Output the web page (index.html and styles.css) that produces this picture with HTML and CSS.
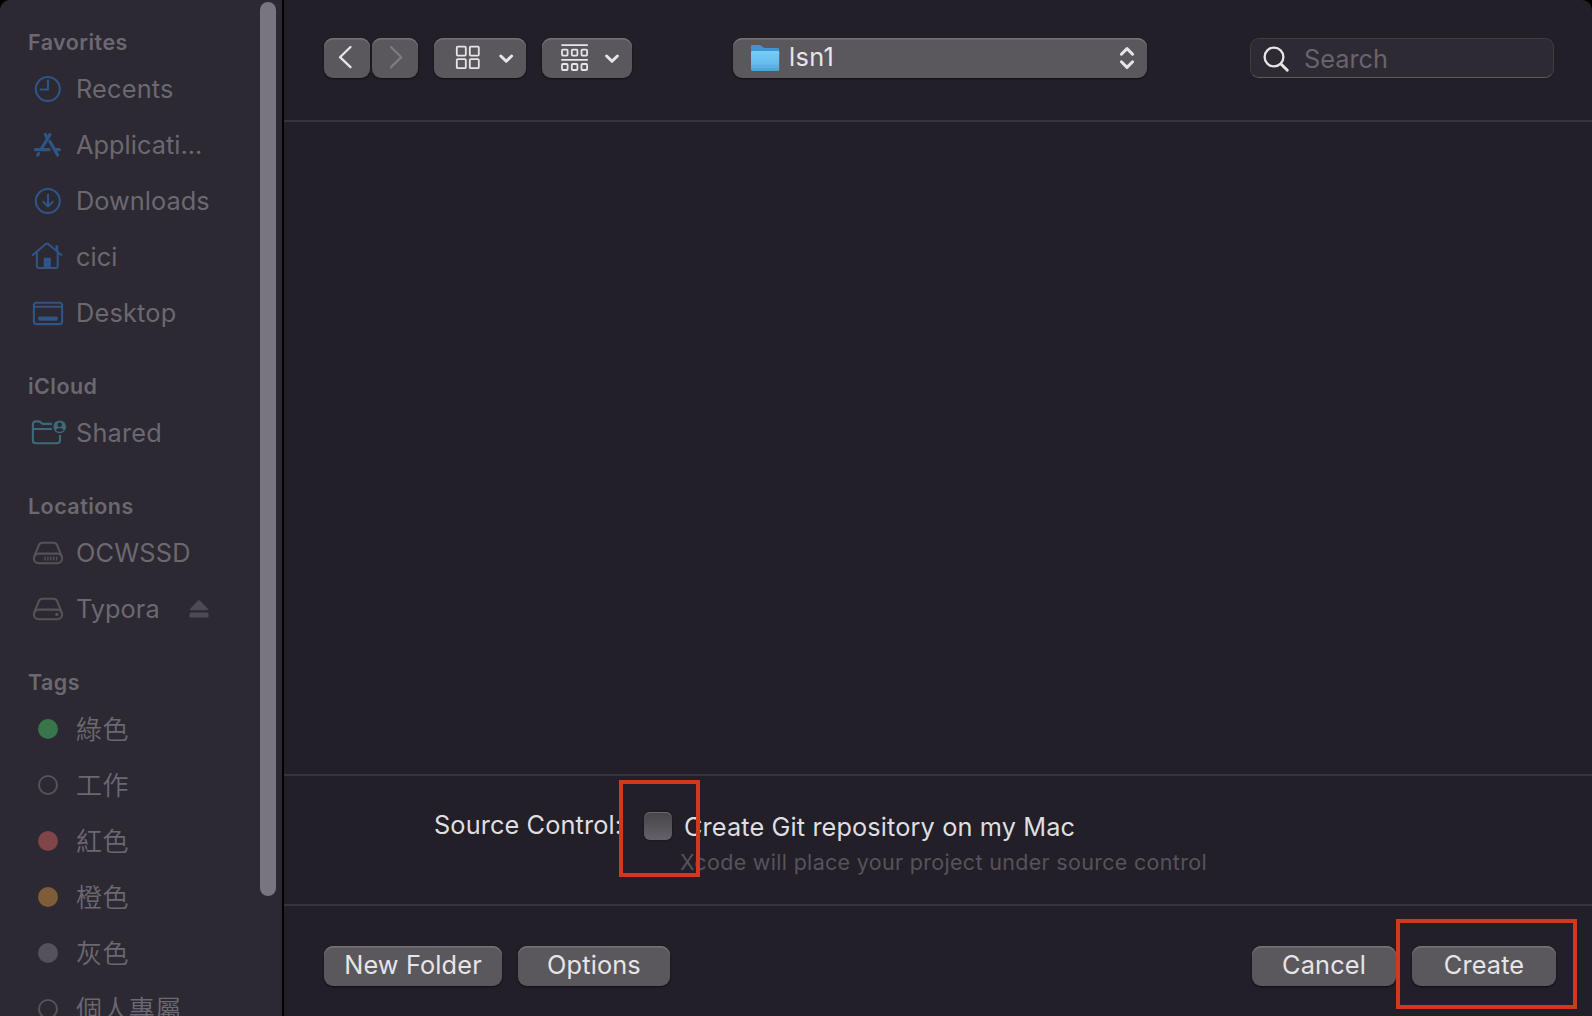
FILE: index.html
```html
<!DOCTYPE html>
<html lang="en">
<head>
<meta charset="utf-8">
<title>Save panel</title>
<link rel="stylesheet" href="styles.css">
</head>
<body>
<div class="window">
  <aside class="sidebar">
    <nav class="places">
      <h2 class="heading first">Favorites</h2>
      <div class="row"><svg class="icon blue" viewBox="0 0 40 40"><circle cx="19.8" cy="20" r="12"/><path d="M20 11.5V20.5H12.5"/></svg><span>Recents</span></div>
      <div class="row"><svg class="icon blue bold" viewBox="0 0 40 40"><path d="M22 9.5L13.6 23.5M17.3 9.5L19.3 12.8M21.9 16.5L29.6 30M7.5 24.7H21M28 24.7H31.3M9.6 30.2L10.7 28.6"/></svg><span class="tight">Applicati...</span></div>
      <div class="row"><svg class="icon blue" viewBox="0 0 40 40"><circle cx="19.8" cy="20" r="12"/><path d="M20 13.8V25.2M15.3 20.8L20 25.5L24.7 20.8"/></svg><span class="tight">Downloads</span></div>
      <div class="row"><svg class="icon blue" viewBox="0 0 40 40"><path d="M4.8 18L17.8 7Q19 6 20.2 7L33.4 18M8.9 15V29Q8.9 31 10.9 31H27.7Q29.7 31 29.7 29V15"/><path class="fill" d="M15.7 20.8H22.9V31H15.7ZM27.5 8.3H30.2V15L27.5 12.7Z"/></svg><span class="tight">cici</span></div>
      <div class="row"><svg class="icon blue" viewBox="0 0 40 40"><rect x="5.9" y="9.7" width="28.2" height="21.4" rx="2.5"/><path d="M6 13.8H34"/><rect class="fill" x="10.3" y="23.6" width="19.4" height="4.2" rx="1"/></svg><span>Desktop</span></div>

      <h2 class="heading">iCloud</h2>
      <div class="row"><svg class="icon teal" viewBox="0 0 40 40"><path d="M24 10.9H15.5Q14.5 10.9 13.6 10.1L12.6 9.2Q11.7 8.4 10.5 8.4H7.8Q4.9 8.4 4.9 11.3V27.4Q4.9 30.2 7.8 30.2H29Q32 30.2 32 27.3V22M5 16H24"/><circle class="fill" cx="31.7" cy="13.8" r="6.4"/><circle class="hole" cx="31.7" cy="11.7" r="2.2"/><path class="hole" d="M27.7 17.4Q28.8 14.9 31.7 14.9Q34.6 14.9 35.7 17.4Q34.2 18.8 31.7 18.8Q29.2 18.8 27.7 17.4Z"/></svg><span>Shared</span></div>

      <h2 class="heading">Locations</h2>
      <div class="row"><svg class="icon drive" viewBox="0 0 40 40"><rect x="5.9" y="20.6" width="28.2" height="9.6" rx="4.8"/><path d="M6.3 23.5L10.8 12.3Q11.8 9.8 14.3 9.8H25.7Q28.2 9.8 29.2 12.3L33.7 23.5"/><path class="thin" d="M17 23.4V27.4M19.9 23.4V27.4M22.8 23.4V27.4M25.7 23.4V27.4M28.6 23.4V27.4"/></svg><span>OCWSSD</span></div>
      <div class="row"><svg class="icon drive" viewBox="0 0 40 40"><rect x="5.9" y="20.6" width="28.2" height="9.6" rx="4.8"/><path d="M6.3 23.5L10.8 12.3Q11.8 9.8 14.3 9.8H25.7Q28.2 9.8 29.2 12.3L33.7 23.5"/><circle class="fill" cx="28.8" cy="25.4" r="1.7"/></svg><span class="grow tight">Typora</span><svg class="eject" viewBox="0 0 20 20"><path d="M9 1.6Q10 .6 11 1.6L19 10Q20 11.3 18.5 11.3H1.5Q0 11.3 1 10Z"/><rect x=".5" y="13.6" width="19" height="5" rx="1.2"/></svg></div>

      <h2 class="heading">Tags</h2>
      <div class="row"><i class="tag green"></i><span class="cjk">綠色</span></div>
      <div class="row"><i class="tag hollow"></i><span class="cjk">工作</span></div>
      <div class="row"><i class="tag red"></i><span class="cjk">紅色</span></div>
      <div class="row"><i class="tag orange"></i><span class="cjk">橙色</span></div>
      <div class="row"><i class="tag gray"></i><span class="cjk">灰色</span></div>
      <div class="row"><i class="tag hollow"></i><span class="cjk">個人專屬</span></div>
    </nav>
    <div class="scrollbar"></div>
  </aside>

  <main class="main">
    <header class="toolbar">
      <div class="btn nav"><svg width="46" height="40" viewBox="0 0 46 40"><path class="s2" d="M26.5 9L16 19.2L26.5 29.2"/></svg></div>
      <div class="btn nav forward"><svg width="46" height="40" viewBox="0 0 46 40"><path class="s2" d="M19 9L29.3 19.2L19 29.2"/></svg></div>
      <div class="btn view"><svg width="92" height="40" viewBox="0 0 92 40"><g class="s15"><rect x="22.8" y="8.6" width="9" height="9" rx="1"/><rect x="35.8" y="8.6" width="9" height="9" rx="1"/><rect x="22.8" y="21.2" width="9" height="9" rx="1"/><rect x="35.8" y="21.2" width="9" height="9" rx="1"/></g><path class="s3" d="M66.8 18L72.2 23.3L77.6 18"/></svg></div>
      <div class="btn group"><svg width="90" height="40" viewBox="0 0 90 40"><g class="s18"><path d="M20 7.1H45.2M20 21.8H45.2"/><rect x="20" y="11.6" width="5.6" height="6" rx="1"/><rect x="29.8" y="11.6" width="5.6" height="6" rx="1"/><rect x="39.5" y="11.6" width="5.6" height="6" rx="1"/><rect x="20" y="26" width="5.6" height="6" rx="1"/><rect x="29.8" y="26" width="5.6" height="6" rx="1"/><rect x="39.5" y="26" width="5.6" height="6" rx="1"/></g><path class="s3" d="M64.6 18L70 23.3L75.4 18"/></svg></div>
      <div class="btn popup">
        <svg class="folder" width="30" height="28" viewBox="0 0 30 28"><defs><linearGradient id="front" x1="0" y1="0" x2="0" y2="1"><stop offset="0" stop-color="#78cdf8"/><stop offset=".7" stop-color="#62bbec"/><stop offset="1" stop-color="#4aa0d3"/></linearGradient></defs><path fill="#3f95cf" d="M1 2.2Q1 1 2.2 1H9.5Q10.6 1 11.4 1.8L13 3.2Q13.8 4 15 4H28Q29.2 4 29.2 5.2V12H1Z"/><path fill="url(#front)" d="M1 8.2Q1 7 2.2 7H28Q29.2 7 29.2 8.2V25.5Q29.2 27 28 27H2.2Q1 27 1 25.5Z"/><path fill="#4fa6d8" d="M1 21H29.2V21.6H1ZM1 24.6H29.2V25.2H1Z"/></svg>
        <span class="name">lsn1</span>
        <svg width="16" height="24" viewBox="0 0 16 24"><path class="s3" d="M2.4 8.2L8 2.6L13.6 8.2M2.4 15.8L8 21.4L13.6 15.8"/></svg>
      </div>
      <div class="search"><svg width="28" height="28" viewBox="0 0 28 28"><circle class="s2" cx="11" cy="11" r="9.4"/><path class="s25" d="M18 18L24.3 24.3"/></svg><span>Search</span></div>
    </header>
    <section class="files"></section>
    <section class="accessory">
      <span class="label">Source Control:</span>
      <i class="checkbox"></i>
      <div class="choice">
        <div class="option">Create Git repository on my Mac</div>
        <div class="hint">Xcode will place your project under source control</div>
      </div>
      <div class="mark mark-check"></div>
    </section>
    <footer class="footer">
      <div class="btn new">New Folder</div>
      <div class="btn options">Options</div>
      <div class="btn cancel">Cancel</div>
      <div class="btn create">Create</div>
      <div class="mark mark-create"></div>
    </footer>
  </main>
</div>
</body>
</html>
```
FILE: styles.css
```css
* { box-sizing: border-box; }
body { margin: 0; background: #000; font-family: Inter, "Noto Sans CJK TC", sans-serif; }
svg { display: block; fill: none; flex: none; }
.window { display: flex; width: 1592px; height: 1016px; overflow: hidden; border-radius: 10px 10px 0 0; background: #221f28; }

.sidebar { display: flex; width: 284px; flex: none; overflow: hidden; background: #2c2932; border-right: 2px solid #000; color: #6b6872; }
.places { width: 260px; height: 1016px; overflow: hidden; padding-left: 28px; }
.scrollbar { width: 16px; height: 894px; margin-top: 2px; border-radius: 8px; background: #787480; }
.heading { margin: 0; height: 64px; padding-top: 32px; font-size: 21.5px; line-height: 26px; font-weight: 600; letter-spacing: .45px; }
.heading.first { height: 61px; padding-top: 29px; }
.row { display: flex; align-items: center; height: 56px; font-size: 25.3px; line-height: 32px; letter-spacing: .2px; white-space: nowrap; }
.tight { letter-spacing: .05px; }
.icon { width: 40px; height: 40px; margin-right: 8px; stroke-width: 2.1; stroke-linecap: round; stroke-linejoin: round; }
.blue { stroke: #2f5486; }
.teal { stroke: #3c6a7b; stroke-linecap: butt; }
.drive { stroke: #56525a; }
.bold { stroke-width: 3.2; }
.thin { stroke-width: 1.4; stroke-linecap: butt; }
.blue .fill { fill: #2f5486; stroke: none; }
.teal .fill { fill: #3c6a7b; stroke: none; }
.drive .fill { fill: #56525a; stroke: none; }
.teal .hole { fill: #2c2932; stroke: none; }
.grow { flex: 1; }
.eject { width: 20px; height: 20px; margin-right: 51.5px; fill: #4e4a53; }
.tag { width: 20px; height: 20px; margin: 0 18.4px 0 9.6px; border-radius: 50%; flex: none; }
.green { background: #39754a; }
.red { background: #814549; }
.orange { background: #7d5e38; }
.gray { background: #55515b; }
.hollow { border: 2px solid #56525a; }
.cjk { font-family: "Noto Sans CJK TC", sans-serif; font-size: 26px; font-weight: 350; padding-bottom: 2px; letter-spacing: .4px; }

.main { display: flex; flex-direction: column; flex: 1; color: #dfdee0; }
.toolbar { display: flex; height: 122px; padding: 38px 38px 0 40px; border-bottom: 2px solid #36333c; }
.btn { height: 40px; border-radius: 9px; background: #5a575d; box-shadow: inset 0 1.5px 0 #757279, 0 1px 2px #111015; flex: none; font-size: 25.3px; line-height: 37px; letter-spacing: .15px; text-align: center; color: #e6e5e7; }
.s2, .s15, .s18, .s3, .s25 { stroke: #e6e5e7; stroke-linecap: round; stroke-linejoin: round; }
.s2 { stroke-width: 2.3; }
.s15 { stroke-width: 1.8; }
.s18 { stroke-width: 1.8; }
.s3 { stroke-width: 3; }
.s25 { stroke-width: 2.9; }
.nav { width: 46px; margin-right: 2px; }
.forward { margin-right: 16px; }
.forward .s2 { stroke: #7d7a81; }
.view { width: 92px; margin-right: 16px; }
.group { width: 90px; margin-right: 101px; }
.popup { display: flex; width: 414px; padding: 0 12px 0 17px; align-items: flex-start; text-align: left; }
.popup svg { margin-top: 8px; }
.popup .folder { margin-top: 6px; }
.name { flex: 1; padding-left: 9px; letter-spacing: .4px; }
.search { display: flex; width: 304px; height: 40px; margin-left: auto; padding: 7px 0 0 12px; border: 1px solid #403d45; border-bottom: 1.5px solid #5c5960; border-radius: 9px; background: #2d2a33; color: #67646c; font-size: 25.3px; line-height: 25px; }
.search svg { margin-top: -.5px; }
.search span { padding-left: 13px; }
.files { flex: 1; }
.accessory { position: relative; display: flex; height: 132px; padding: 36px 0 0 150px; border-top: 2px solid #36333c; border-bottom: 2px solid #36333c; font-size: 25.3px; line-height: 30px; letter-spacing: .12px; white-space: nowrap; }
.label { width: 186px; margin: -2px 24px 0 0; }
.checkbox { width: 28px; height: 28px; border-radius: 6px; background: linear-gradient(#464349, #646168); box-shadow: inset 0 1px 0 #6b686f, 0 0 2px #111015; }
.choice { padding-left: 8px; }
.option { padding-left: 4px; }
.hint { margin-top: 2px; color: #56535b; font-size: 21.5px; line-height: 36px; letter-spacing: .31px; }
.footer { position: relative; display: flex; height: 110px; padding: 40px 36px 0 40px; }
.new { width: 178px; margin-right: 16px; }
.options { width: 152px; }
.cancel { width: 144px; margin-left: auto; margin-right: 16px; }
.create { width: 144px; }
.mark { position: absolute; border: 4px solid #d2371f; }
.mark-check { left: 335px; top: 4px; width: 81px; height: 97px; }
.mark-create { right: 15px; top: 13px; width: 181px; height: 90px; }
```
